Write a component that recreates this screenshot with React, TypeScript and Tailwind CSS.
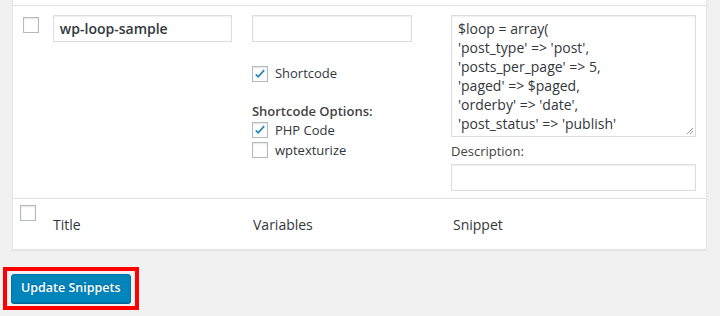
import React from 'react';

const Check = ({ checked = false }: { checked?: boolean }) => (
  <span className="flex h-4 w-4 shrink-0 items-center justify-center border border-[#b4b9be] bg-white shadow-[inset_0_1px_2px_rgba(0,0,0,0.1)]">
    {checked && (
      <svg width="14" height="14" viewBox="0 0 20 20">
        <path d="M4 10.5l3.5 3.5L16 4.5" fill="none" stroke="#1e8cbe" strokeWidth="2.6" />
      </svg>
    )}
  </span>
);

const loopCode = `$loop = array(
'post_type' => 'post',
'posts_per_page' => 5,
'paged' => $paged,
'orderby' => 'date',
'post_status' => 'publish'`;

const App = () => {
  return (
    <div className="h-[316px] w-[720px] overflow-hidden bg-[#f1f1f1] font-['Open_Sans',sans-serif] text-[#32373c]">
      <div className="ml-3 w-[695px] border-x border-b border-[#e5e5e5] bg-white shadow-[0_1px_1px_rgba(0,0,0,0.04)]">
        <div className="h-[6px] border-b border-[#e1e1e1]" />
        {/* snippet row */}
        <div className="flex h-[193px] border-b border-[#e1e1e1] pt-[9px]">
          <div className="w-[40px] pl-[10px] pt-[2px]">
            <Check />
          </div>
          <div className="w-[200px]">
            <div className="flex h-[27px] w-[179px] items-center border border-[#dddddd] px-[6px] text-[14px] font-semibold text-[#32373c] shadow-[inset_0_1px_2px_rgba(0,0,0,0.07)]">
              wp-loop-sample
            </div>
          </div>
          <div className="w-[200px]">
            <div className="h-[27px] w-[160px] border border-[#dddddd] shadow-[inset_0_1px_2px_rgba(0,0,0,0.07)]" />
            <label className="mt-[22px] flex items-center gap-[7px] text-[13px]">
              <Check checked />
              Shortcode
            </label>
            <div className="mt-[18px] text-[13px] font-semibold leading-[18px] text-[#444]">Shortcode Options:</div>
            <label className="mt-[1px] flex items-center gap-[7px] text-[13px] leading-[18px]">
              <Check checked />
              PHP Code
            </label>
            <label className="mt-[2px] flex items-center gap-[7px] text-[13px] leading-[18px]">
              <Check />
              wptexturize
            </label>
          </div>
          <div className="flex-1 pr-[10px]">
            <div className="relative h-[122px] w-[245px] overflow-hidden whitespace-pre border border-[#dddddd] px-[6px] pt-[3px] text-[14px] leading-[19px] text-[#32373c] shadow-[inset_0_1px_2px_rgba(0,0,0,0.07)]">
              {loopCode}
              <svg className="absolute bottom-[1px] right-[1px]" width="8" height="8" viewBox="0 0 8 8">
                <path d="M1 7L7 1M4 7L7 4" stroke="#999" strokeWidth="1" />
              </svg>
            </div>
            <div className="mt-[5px] text-[13px] leading-[18px] text-[#444]">Description:</div>
            <div className="mt-[4px] h-[27px] w-[245px] border border-[#dddddd] shadow-[inset_0_1px_2px_rgba(0,0,0,0.07)]" />
          </div>
        </div>
        {/* footer row */}
        <div className="flex h-[50px]">
          <div className="w-[40px] pl-[7px] pt-[6px]">
            <Check />
          </div>
          <div className="w-[200px] pt-[15px] text-[14px] text-[#32373c]">Title</div>
          <div className="w-[200px] pt-[15px] text-[14px] text-[#32373c]">Variables</div>
          <div className="flex-1 pt-[15px] text-[14px] text-[#32373c]">Snippet</div>
        </div>
      </div>
      <div className="ml-[3px] mt-[17px] inline-block border-4 border-[#ff0000] px-[4px] py-[3px]">
        <button className="h-[29px] rounded-[3px] border border-[#0073aa] bg-[#0085ba] px-[9px] text-[12.5px] font-semibold text-white shadow-[0_1px_0_#006799] [text-shadow:0_-1px_1px_#006799]">
          Update Snippets
        </button>
      </div>
    </div>
  );
};

export default App;
